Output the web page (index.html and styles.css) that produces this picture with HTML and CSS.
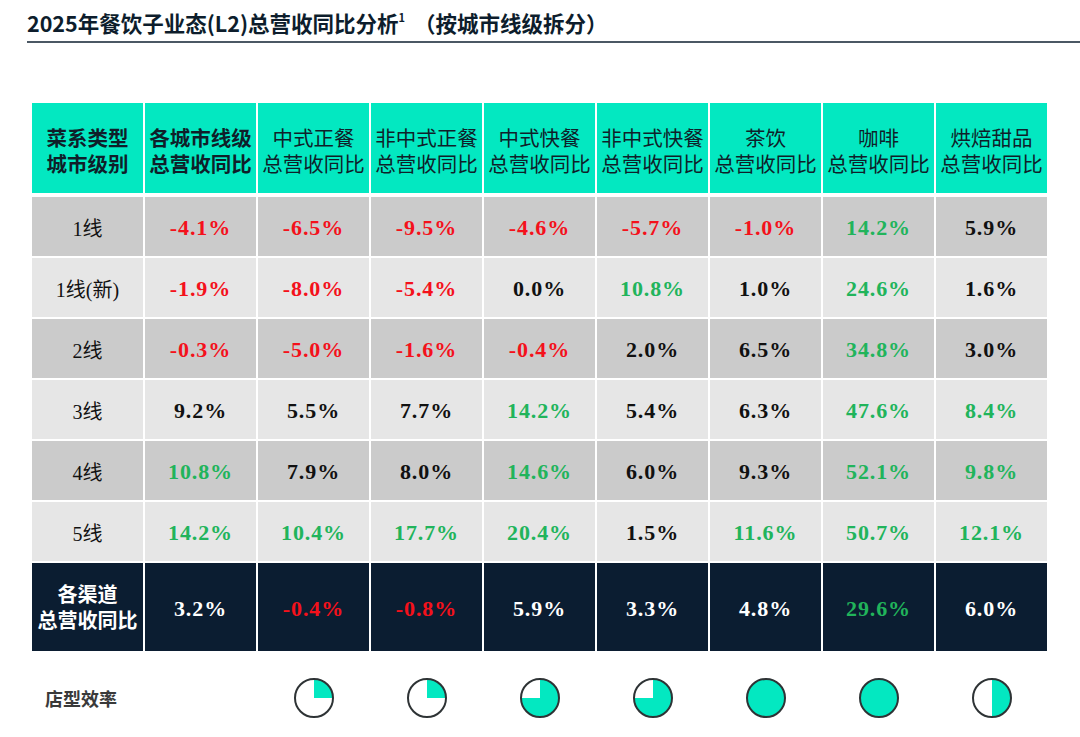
FILE: index.html
```html
<!DOCTYPE html>
<html lang="zh-CN">
<head>
<meta charset="utf-8">
<title>2025年餐饮子业态(L2)总营收同比分析</title>
<link rel="stylesheet" href="styles.css">
</head>
<body>
<header class="title"><h1>2025年餐饮子业态(L2)总营收同比分析<sup>1</sup> （按城市线级拆分）</h1></header>

<div class="table">
  <div class="cell head strong">菜系类型<br>城市级别</div>
  <div class="cell head strong">各城市线级<br>总营收同比</div>
  <div class="cell head">中式正餐<br>总营收同比</div>
  <div class="cell head">非中式正餐<br>总营收同比</div>
  <div class="cell head">中式快餐<br>总营收同比</div>
  <div class="cell head">非中式快餐<br>总营收同比</div>
  <div class="cell head">茶饮<br>总营收同比</div>
  <div class="cell head">咖啡<br>总营收同比</div>
  <div class="cell head">烘焙甜品<br>总营收同比</div>

  <div class="cell dark lbl">1线</div>
  <div class="cell dark neg">-4.1%</div>
  <div class="cell dark neg">-6.5%</div>
  <div class="cell dark neg">-9.5%</div>
  <div class="cell dark neg">-4.6%</div>
  <div class="cell dark neg">-5.7%</div>
  <div class="cell dark neg">-1.0%</div>
  <div class="cell dark pos">14.2%</div>
  <div class="cell dark num">5.9%</div>

  <div class="cell light lbl">1线(新)</div>
  <div class="cell light neg">-1.9%</div>
  <div class="cell light neg">-8.0%</div>
  <div class="cell light neg">-5.4%</div>
  <div class="cell light num">0.0%</div>
  <div class="cell light pos">10.8%</div>
  <div class="cell light num">1.0%</div>
  <div class="cell light pos">24.6%</div>
  <div class="cell light num">1.6%</div>

  <div class="cell dark lbl">2线</div>
  <div class="cell dark neg">-0.3%</div>
  <div class="cell dark neg">-5.0%</div>
  <div class="cell dark neg">-1.6%</div>
  <div class="cell dark neg">-0.4%</div>
  <div class="cell dark num">2.0%</div>
  <div class="cell dark num">6.5%</div>
  <div class="cell dark pos">34.8%</div>
  <div class="cell dark num">3.0%</div>

  <div class="cell light lbl">3线</div>
  <div class="cell light num">9.2%</div>
  <div class="cell light num">5.5%</div>
  <div class="cell light num">7.7%</div>
  <div class="cell light pos">14.2%</div>
  <div class="cell light num">5.4%</div>
  <div class="cell light num">6.3%</div>
  <div class="cell light pos">47.6%</div>
  <div class="cell light pos">8.4%</div>

  <div class="cell dark lbl">4线</div>
  <div class="cell dark pos">10.8%</div>
  <div class="cell dark num">7.9%</div>
  <div class="cell dark num">8.0%</div>
  <div class="cell dark pos">14.6%</div>
  <div class="cell dark num">6.0%</div>
  <div class="cell dark num">9.3%</div>
  <div class="cell dark pos">52.1%</div>
  <div class="cell dark pos">9.8%</div>

  <div class="cell light lbl">5线</div>
  <div class="cell light pos">14.2%</div>
  <div class="cell light pos">10.4%</div>
  <div class="cell light pos">17.7%</div>
  <div class="cell light pos">20.4%</div>
  <div class="cell light num">1.5%</div>
  <div class="cell light pos">11.6%</div>
  <div class="cell light pos">50.7%</div>
  <div class="cell light pos">12.1%</div>

  <div class="cell total strong">各渠道<br>总营收同比</div>
  <div class="cell total wnum">3.2%</div>
  <div class="cell total neg">-0.4%</div>
  <div class="cell total neg">-0.8%</div>
  <div class="cell total wnum">5.9%</div>
  <div class="cell total wnum">3.3%</div>
  <div class="cell total wnum">4.8%</div>
  <div class="cell total pos">29.6%</div>
  <div class="cell total wnum">6.0%</div>
</div>

<div class="efficiency">
  <div class="eff-label">店型效率</div>
  <div class="eff-cell"></div>
  <div class="eff-cell"><span class="pie q1"></span></div>
  <div class="eff-cell"><span class="pie q1"></span></div>
  <div class="eff-cell"><span class="pie q3"></span></div>
  <div class="eff-cell"><span class="pie q3"></span></div>
  <div class="eff-cell"><span class="pie full"></span></div>
  <div class="eff-cell"><span class="pie full"></span></div>
  <div class="eff-cell"><span class="pie half"></span></div>
</div>
</body>
</html>
```

FILE: styles.css
```css
* { box-sizing: border-box; }

body {
  margin: 0;
  background: #ffffff;
  font-family: "Noto Sans CJK SC", "Noto Sans", sans-serif;
  color: #111;
}

.title {
  margin-left: 27px;
  height: 43px;
  border-bottom: 2px solid #4b5864;
}

.title h1 {
  margin: 0;
  padding-top: 9px;
  font-size: 21.5px;
  line-height: 28px;
  font-weight: 700;
  color: #0d1d2c;
  letter-spacing: 0;
}

.title sup {
  font-size: 11px;
  line-height: 0;
  vertical-align: 10px;
  margin-right: 4px;
}

.table {
  margin: 60px 0 0 32px;
  display: grid;
  grid-template-columns: repeat(9, 111px);
  grid-template-rows: 92px repeat(6, 59px) 88px;
  column-gap: 2px;
  row-gap: 2px;
}

.cell {
  display: flex;
  align-items: center;
  justify-content: center;
  text-align: center;
}

.head {
  background: #03e8c1;
  font-size: 20.5px;
  line-height: 26px;
  color: #0f1f2a;
  margin-bottom: 2px;
  padding-top: 4px;
}

.head.strong { font-weight: 700; }

.dark { background: #cbcbcb; }
.light { background: #e6e6e6; }

.lbl {
  font-family: "Liberation Serif", "Noto Sans CJK SC", serif;
  font-size: 20px;
  color: #111;
  padding-top: 2px;
}

.num, .neg, .pos, .wnum {
  font-family: "Liberation Serif", "DejaVu Serif", serif;
  font-weight: 700;
  font-size: 22px;
  letter-spacing: 0.9px;
  padding-top: 3px;
}

.total {
  background: #0b1d31;
  color: #ffffff;
}

.cell.num { color: #111; }
.cell.neg { color: #f4111b; }
.cell.pos { color: #21b45b; }
.cell.wnum { color: #ffffff; }

.total.strong {
  font-weight: 700;
  font-size: 20px;
  line-height: 26px;
}

.efficiency {
  margin: 27px 0 0 32px;
  display: grid;
  grid-template-columns: repeat(9, 111px);
  column-gap: 2px;
  height: 40px;
}

.eff-label {
  display: flex;
  align-items: center;
  padding-left: 13px;
  font-size: 18px;
  font-weight: 700;
  color: #3a3a3a;
}

.eff-cell {
  display: flex;
  align-items: center;
  justify-content: center;
}

.pie {
  width: 40px;
  height: 40px;
  border-radius: 50%;
  border: 2px solid #2e3335;
}

.q1 { background: conic-gradient(#03e8c1 0 25%, #ffffff 25% 100%); }
.q3 { background: conic-gradient(#03e8c1 0 75%, #ffffff 75% 100%); }
.half { background: conic-gradient(#03e8c1 0 50%, #ffffff 50% 100%); }
.full { background: #03e8c1; }
```
